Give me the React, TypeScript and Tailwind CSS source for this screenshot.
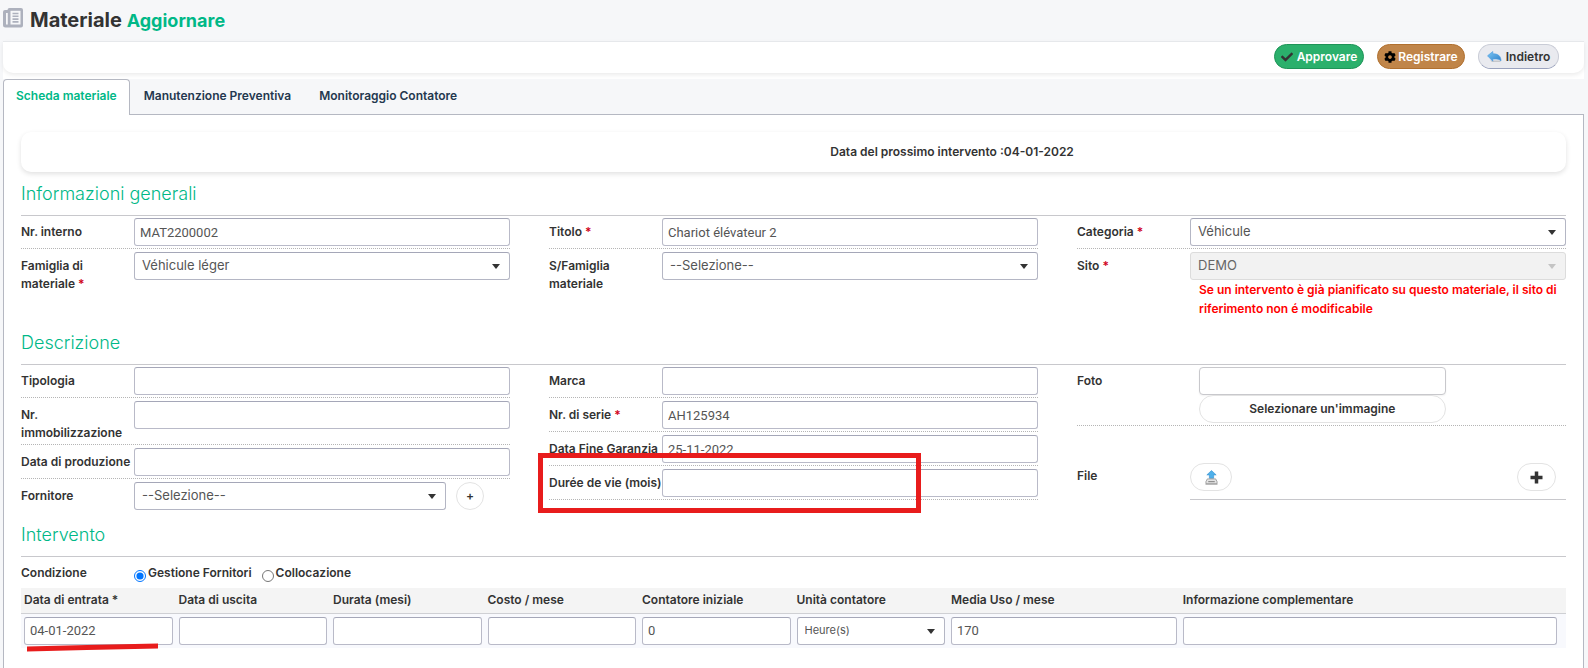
import { useState } from "react";
import type { ReactNode } from "react";
import { FaCheck, FaCog } from "react-icons/fa";

const fieldClass =
  "block h-7 w-full rounded-[3px] border border-[#b9bac8] border-t-[#a5a7b8] bg-white px-[5px] font-['Roboto','Liberation_Sans',sans-serif] text-[13px] font-normal text-[#555] outline-none focus:border-[#00b887]";

const tabs = ["Scheda materiale", "Manutenzione Preventiva", "Monitoraggio Contatore"];

const tableHeads = [
  "Data di entrata *",
  "Data di uscita",
  "Durata (mesi)",
  "Costo / mese",
  "Contatore iniziale",
  "Unità contatore",
  "Media Uso / mese",
  "Informazione complementare",
];

const NewspaperIcon = () => (
  <svg width="20" height="20" viewBox="0 0 20 20" aria-hidden="true">
    <path
      d="M6.5 0H18a2 2 0 0 1 2 2v15.500a2 2 0 0 1-2 2H2.500a2.500 2.500 0 0 1-2.500-2.500V4a2 2 0 0 1 2-2h2.500a2 2 0 0 1 2-2Z"
      fill="#adb1bd"
    />
    <path d="M3 5h1.800v11.500H3Z" fill="#f6f7f9" />
    <path d="M7.500 2.800h10v13.700h-10Z" fill="#f6f7f9" />
    <path d="M9.500 5.500h6M9.500 8.300h6M9.500 11.100h6M9.500 13.900h6" stroke="#adb1bd" strokeWidth="1.600" />
  </svg>
);

const BackIcon = () => (
  <svg width="15" height="12" viewBox="0 0 15 12" aria-hidden="true">
    <defs>
      <linearGradient id="back-fill" x1="0" y1="0" x2="1" y2="1">
        <stop offset="0" stopColor="#7cc8f5" />
        <stop offset="1" stopColor="#2f7fc8" />
      </linearGradient>
    </defs>
    <path d="M3 9.500h10.500v1.500H5Z" fill="#000" opacity=".15" />
    <path
      d="M.5 4.800 5.800.5v2.300c4.800 0 8.200 1.700 8.200 7.200-1.200-1.700-3.500-2.200-8.200-2v2.200Z"
      fill="url(#back-fill)"
      stroke="#4a9be0"
      strokeWidth=".6"
      strokeLinejoin="round"
    />
  </svg>
);

const UploadIcon = () => (
  <svg width="13" height="15" viewBox="0 0 14 16" aria-hidden="true">
    <path d="M7 .5 12 5.200H9.300V8.800H4.700V5.200H2Z" fill="#4fb0ea" stroke="#3a94d2" strokeWidth=".7" />
    <path d="M2.500 9.500h9l1.500 3v2.200H1v-2.200Z" fill="#e3e3e3" stroke="#8b8b8b" strokeWidth=".8" />
    <path d="M3.500 12.500h7" stroke="#777" strokeWidth="1" />
    <path d="M.5 15.300h13" stroke="#999" strokeWidth=".8" />
  </svg>
);

const PlusIcon = () => (
  <svg width="13" height="13" viewBox="0 0 13 13" aria-hidden="true">
    <path d="M6.500.500v12M.5 6.500h12" stroke="#333" strokeWidth="3.500" />
  </svg>
);

type SelectBoxProps = {
  id?: string;
  label?: string;
  value: string;
  disabled?: boolean;
  small?: boolean;
};

const SelectBox = ({ id, label, value, disabled, small }: SelectBoxProps) => (
  <div className="relative w-full">
    <select
      id={id}
      aria-label={label}
      disabled={disabled}
      defaultValue={value}
      className={`block h-7 w-full appearance-none rounded-[3px] border pr-6 pl-[7px] font-normal outline-none ${
        small ? "text-[11px]" : "text-[13px]"
      } ${
        disabled
          ? "border-[#dcdcdc] bg-[#f2f2f2] text-[#666] opacity-100"
          : "border-[#b4b6c4] border-t-[#a5a7b8] bg-white text-[#555]"
      }`}
    >
      <option>{value}</option>
    </select>
    <svg
      width="8"
      height="5"
      viewBox="0 0 8 5"
      className="pointer-events-none absolute top-3 right-[10px]"
      aria-hidden="true"
    >
      <path d="M0 0h8L4 5Z" fill={disabled ? "#c4c4c4" : "#333"} />
    </svg>
  </div>
);

type FieldProps = {
  id: string;
  label: string;
  required?: boolean;
  last?: boolean;
  note?: ReactNode;
  children: ReactNode;
};

const Field = ({ id, label, required, last, note, children }: FieldProps) => (
  <div
    className={`relative flex items-start pt-[3px] pb-[2px] first:pt-[2px] ${
      last ? "" : "border-b border-dotted border-[#b5b5b5]"
    }`}
  >
    <label htmlFor={id} className="w-[113px] shrink-0 pt-[5px] leading-[18px]">
      {label} {required && <span className="text-[#d0021b]">*</span>}
    </label>
    <div className="min-w-0 flex-1">{children}</div>
    {note}
  </div>
);

const SectionTitle = ({ children }: { children: ReactNode }) => (
  <h2 className="border-b border-[#c8c8cc] pt-2 pb-[7px] text-[18px] leading-7 font-light text-[#00b887]">
    {children}
  </h2>
);

const Columns = ({ children }: { children: ReactNode }) => (
  <div className="grid grid-cols-3 items-start gap-x-[39px]">{children}</div>
);

export default function App() {
  const [tab, setTab] = useState(tabs[0]);
  const [condition, setCondition] = useState("fornitori");

  return (
    <div className="flex min-h-screen flex-col bg-[#f6f7f9] pr-1 pl-[3px] font-['Inter',sans-serif] text-[12px] font-semibold text-[#333]">
      <header className="flex h-[41px] items-start gap-[7px] pt-2">
        <NewspaperIcon />
        <h1 className="text-[20px] leading-6 font-bold">
          Materiale <span className="text-[18px] text-[#00b887]">Aggiornare</span>
        </h1>
      </header>

      <div className="bg-white pb-[6px]">
        <div className="flex h-8 items-start justify-end gap-[13px] rounded-b-[10px] border-t border-[#e6e8eb] bg-white pt-[2px] pr-[25px] shadow-[0_2px_4px_rgba(0,0,0,0.08)]">
          <button
            type="button"
            className="flex h-[25px] w-[90px] items-center justify-center gap-1 rounded-full border border-[#1f9458] bg-[#2bb06c] text-white"
          >
            <FaCheck size={12} color="#333" />
            Approvare
          </button>
          <button
            type="button"
            className="flex h-[25px] w-[88px] items-center justify-center gap-[2px] rounded-full border border-[#b0702f] bg-[#c08549] text-white"
          >
            <FaCog size={12} color="#000" />
            Registrare
          </button>
          <button
            type="button"
            className="flex h-[25px] w-[81px] items-center justify-center gap-1 rounded-full border border-[#c9ccd6] border-b-[#9aa2bd] bg-[#e9eaef]"
          >
            <BackIcon />
            Indietro
          </button>
        </div>
      </div>

      <nav className="flex h-9 border-b border-[#b5b8c2]">
        {tabs.map((name) => (
          <button
            key={name}
            type="button"
            onClick={() => setTab(name)}
            className={
              name === tab
                ? "-mb-px rounded-t-[4px] border border-b-0 border-[#b5b8c2] bg-white px-3 pb-[3px] text-[#00b887]"
                : "px-[14px] pb-px text-[#24384f]"
            }
          >
            {name}
          </button>
        ))}
      </nav>

      <main className="flex-1 border-x border-[#b5b8c2] bg-white px-[17px] pt-[17px]">
        <div className="grid h-10 grid-cols-[11fr_10fr] items-center rounded-[10px] bg-white shadow-[0_2px_5px_rgba(0,0,0,0.12)]">
          <p className="col-start-2">Data del prossimo intervento :04-01-2022</p>
        </div>

        <SectionTitle>Informazioni generali</SectionTitle>
        <Columns>
          <div>
            <Field id="interno" label="Nr. interno">
              <input id="interno" className={fieldClass} defaultValue="MAT2200002" />
            </Field>
            <Field id="famiglia" label="Famiglia di materiale" required last>
              <SelectBox id="famiglia" value="Véhicule léger" />
            </Field>
          </div>
          <div>
            <Field id="titolo" label="Titolo" required>
              <input id="titolo" className={fieldClass} defaultValue="Chariot élévateur 2" />
            </Field>
            <Field id="sfamiglia" label="S/Famiglia materiale" last>
              <SelectBox id="sfamiglia" value="--Selezione--" />
            </Field>
          </div>
          <div className="pb-px">
            <Field id="categoria" label="Categoria" required>
              <SelectBox id="categoria" value="Véhicule" />
            </Field>
            <Field id="sito" label="Sito" required last>
              <SelectBox id="sito" value="DEMO" disabled />
              <p className="pl-[9px] leading-[19px] text-[#ff0000]">
                Se un intervento è già pianificato su questo materiale, il sito di riferimento non é modificabile
              </p>
            </Field>
          </div>
        </Columns>

        <SectionTitle>Descrizione</SectionTitle>
        <Columns>
          <div className="pb-px">
            <Field id="tipologia" label="Tipologia">
              <input id="tipologia" className={fieldClass} />
            </Field>
            <Field id="immobilizzazione" label="Nr. immobilizzazione">
              <input id="immobilizzazione" className={fieldClass} />
            </Field>
            <Field id="produzione" label="Data di produzione">
              <input id="produzione" className={fieldClass} />
            </Field>
            <Field id="fornitore" label="Fornitore" last>
              <div className="flex gap-[10px]">
                <div className="w-[83%]">
                  <SelectBox id="fornitore" value="--Selezione--" />
                </div>
                <button
                  type="button"
                  aria-label="Aggiungi fornitore"
                  className="h-7 w-7 rounded-full border border-[#e3e3e3] bg-white"
                >
                  +
                </button>
              </div>
            </Field>
          </div>
          <div>
            <Field id="marca" label="Marca">
              <input id="marca" className={fieldClass} />
            </Field>
            <Field id="serie" label="Nr. di serie" required>
              <input id="serie" className={fieldClass} defaultValue="AH125934" />
            </Field>
            <Field id="garanzia" label="Data Fine Garanzia">
              <input id="garanzia" className={fieldClass} defaultValue="25-11-2022" />
            </Field>
            <Field
              id="durata-vita"
              label="Durée de vie (mois)"
              note={
                <div className="pointer-events-none absolute -top-[13px] -left-[11px] h-[60px] w-[383px] border-[5px] border-[#e81c1c]" />
              }
            >
              <input id="durata-vita" className={fieldClass} />
            </Field>
          </div>
          <div>
            <Field id="foto" label="Foto">
              <div className="w-[68%] pl-[9px]">
                <input
                  id="foto"
                  className="block h-7 w-full rounded-[4px] border border-[#c8c8cc] bg-white px-[6px] shadow-xs outline-none"
                />
                <button type="button" className="h-7 w-full rounded-full border border-[#e3e3e3] bg-white">
                  Selezionare un'immagine
                </button>
              </div>
            </Field>
            <div className="flex pt-[37px]">
              <span className="w-[113px] shrink-0 pt-1 leading-[18px]">File</span>
              <div className="flex flex-1 justify-between border-b border-[#c8c8cc] pr-[10px] pb-2">
                <button
                  type="button"
                  aria-label="Carica file"
                  className="flex h-7 w-[42px] items-center justify-center rounded-full border border-[#e3e3e3] bg-white"
                >
                  <UploadIcon />
                </button>
                <button
                  type="button"
                  aria-label="Aggiungi file"
                  className="flex h-7 w-[39px] items-center justify-center rounded-full border border-[#e3e3e3] bg-white"
                >
                  <PlusIcon />
                </button>
              </div>
            </div>
          </div>
        </Columns>

        <SectionTitle>Intervento</SectionTitle>
        <div className="flex h-[31px] items-center">
          <span className="w-[113px]">Condizione</span>
          <label className="mr-[10px] flex items-center gap-[2px]">
            <input
              type="radio"
              name="condizione"
              className="mt-[6px] h-3 w-3"
              checked={condition === "fornitori"}
              onChange={() => setCondition("fornitori")}
            />
            Gestione Fornitori
          </label>
          <label className="flex items-center gap-[2px]">
            <input
              type="radio"
              name="condizione"
              className="mt-[6px] h-3 w-3"
              checked={condition === "collocazione"}
              onChange={() => setCondition("collocazione")}
            />
            Collocazione
          </label>
        </div>

        <table className="w-full table-fixed border-collapse text-left">
          <colgroup>
            <col className="w-[10%]" />
            <col className="w-[10%]" />
            <col className="w-[10%]" />
            <col className="w-[10%]" />
            <col className="w-[10%]" />
            <col className="w-[10%]" />
            <col className="w-[15%]" />
            <col className="w-[25%]" />
          </colgroup>
          <thead>
            <tr className="h-[25px] border-b border-[#cfd0d4] bg-[#f4f4f4]">
              {tableHeads.map((head) => (
                <th key={head} className="pl-[3px] font-semibold">
                  {head}
                </th>
              ))}
            </tr>
          </thead>
          <tbody>
            <tr className="bg-[#f8f9fd]">
              <td className="relative py-[3px] pr-[3px] pl-[3px]">
                <input aria-label="Data di entrata" className={fieldClass} defaultValue="04-01-2022" />
                <svg
                  width="131"
                  height="9"
                  viewBox="0 0 131 9"
                  className="pointer-events-none absolute -bottom-1 left-[6px]"
                  aria-hidden="true"
                >
                  <path d="M0 3.500 60 2 131 .5V5.500L60 7 0 8.500Z" fill="#e81c1c" />
                </svg>
              </td>
              <td className="p-[3px]">
                <input aria-label="Data di uscita" className={fieldClass} />
              </td>
              <td className="p-[3px]">
                <input aria-label="Durata (mesi)" className={fieldClass} />
              </td>
              <td className="p-[3px]">
                <input aria-label="Costo / mese" className={fieldClass} />
              </td>
              <td className="p-[3px]">
                <input aria-label="Contatore iniziale" className={fieldClass} defaultValue="0" />
              </td>
              <td className="p-[3px]">
                <SelectBox label="Unità contatore" value="Heure(s)" small />
              </td>
              <td className="p-[3px]">
                <input aria-label="Media Uso / mese" className={fieldClass} defaultValue="170" />
              </td>
              <td className="py-[3px] pr-[9px] pl-[3px]">
                <input aria-label="Informazione complementare" className={fieldClass} />
              </td>
            </tr>
          </tbody>
        </table>
      </main>
    </div>
  );
}
